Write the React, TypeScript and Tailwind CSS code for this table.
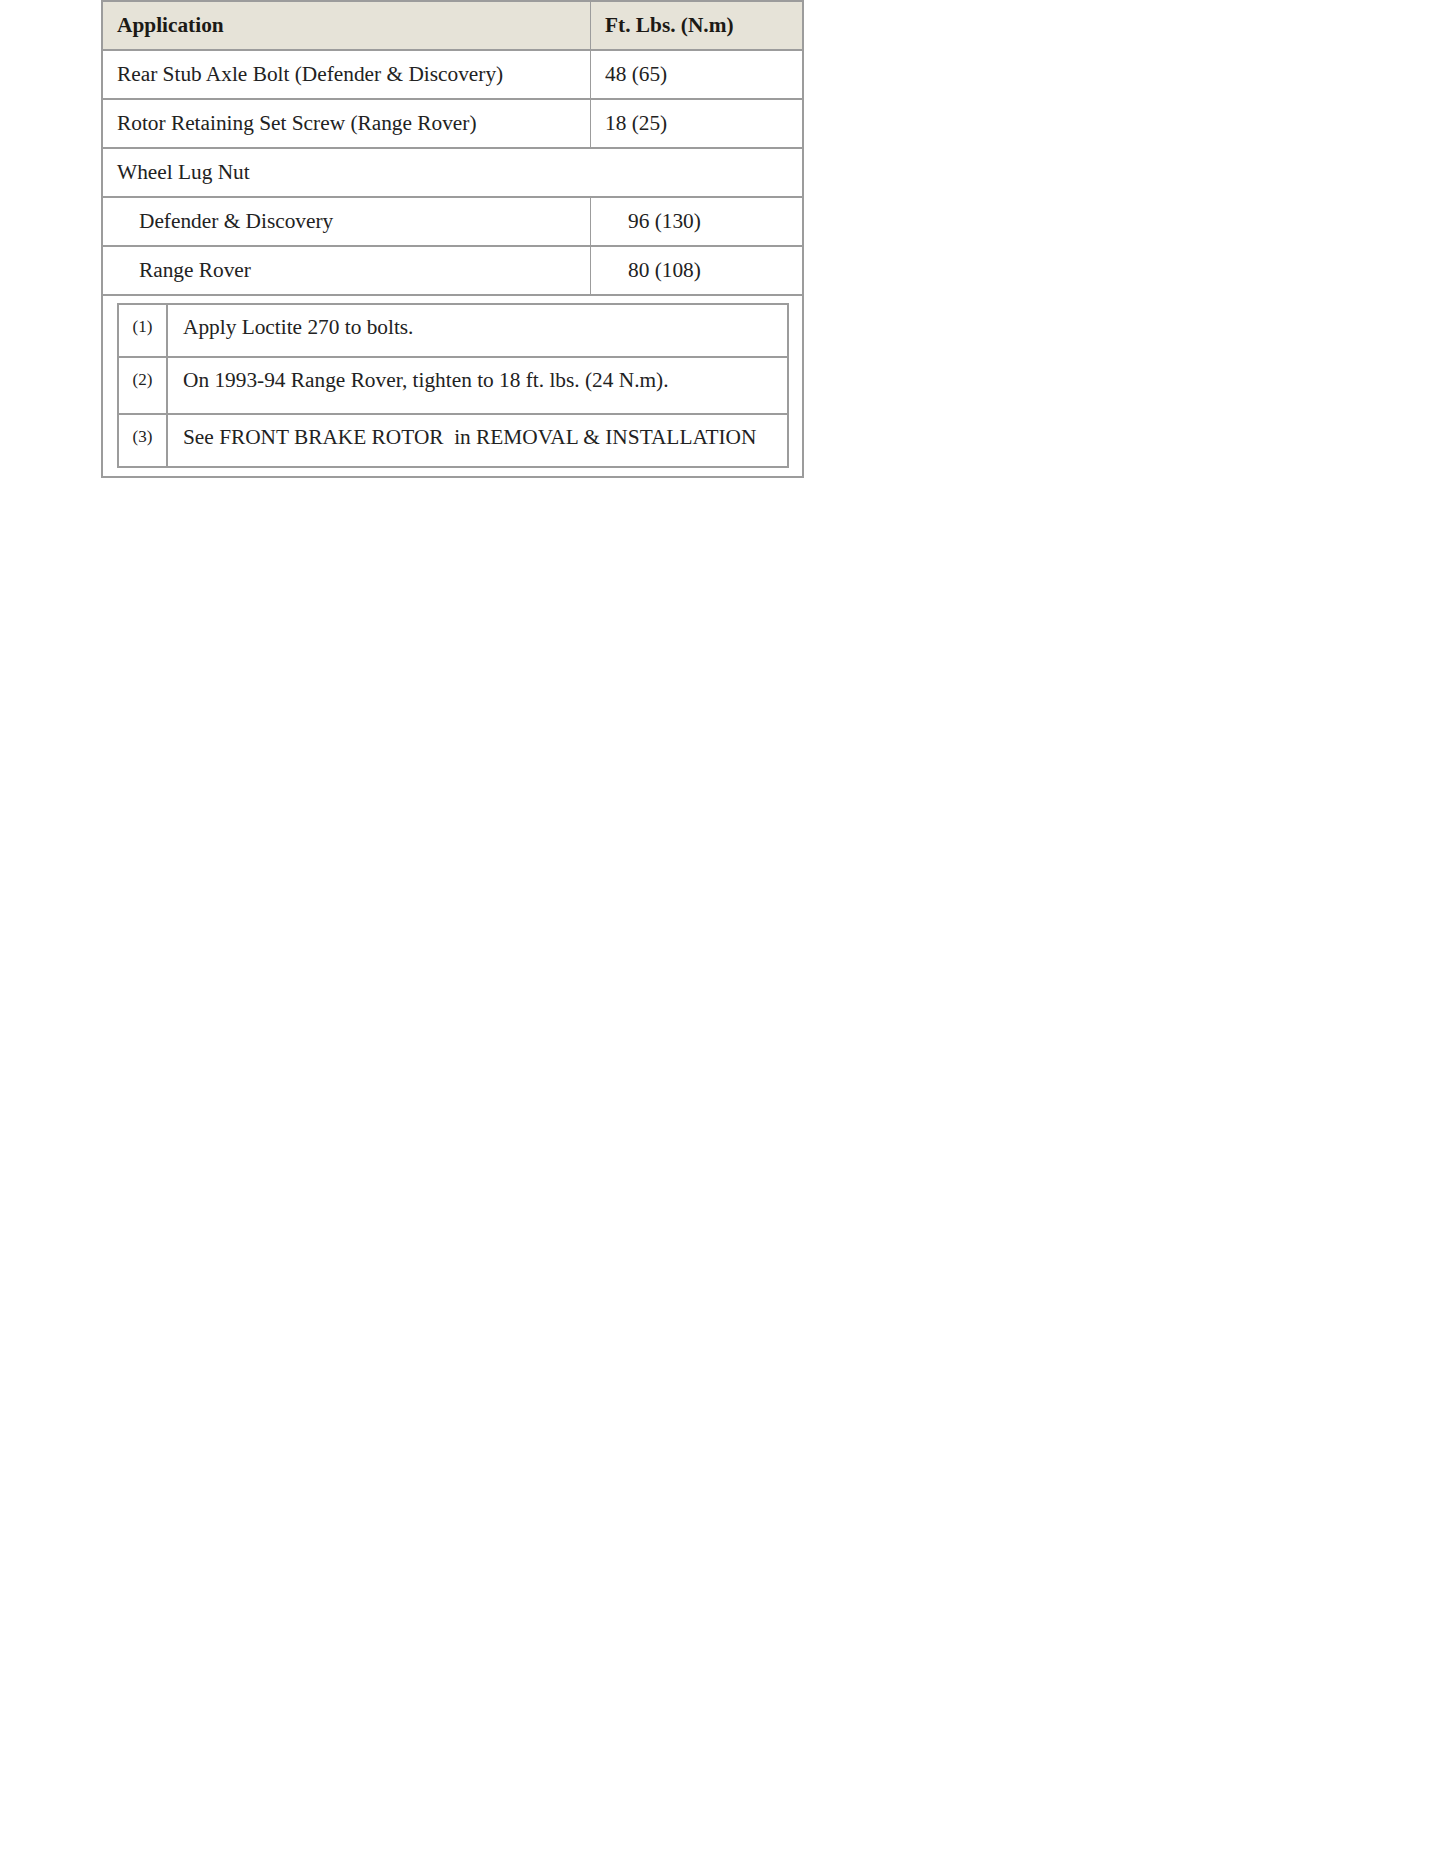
const serif = "font-['Liberation_Serif','Times_New_Roman',serif]"

type Row = { label: string; value?: string; sub?: boolean }

const rows: Row[] = [
  { label: 'Rear Stub Axle Bolt (Defender & Discovery)', value: '48 (65)' },
  { label: 'Rotor Retaining Set Screw (Range Rover)', value: '18 (25)' },
  { label: 'Wheel Lug Nut' },
  { label: 'Defender & Discovery', value: '96 (130)', sub: true },
  { label: 'Range Rover', value: '80 (108)', sub: true },
]

const notes = [
  { n: '(1)', text: 'Apply Loctite 270 to bolts.', h: 'h-[53px]' },
  { n: '(2)', text: 'On 1993-94 Range Rover, tighten to 18 ft. lbs. (24 N.m).', h: 'h-[57px]' },
  { n: '(3)', text: 'See FRONT BRAKE ROTOR\u00a0 in REMOVAL & INSTALLATION', h: 'h-[51px]' },
]

function TorqueRow({ row }: { row: Row }) {
  if (row.value === undefined) {
    return (
      <div className="flex h-[49px] items-center border-b-2 border-[#9c9c9c] px-[14px]">
        <span>{row.label}</span>
      </div>
    )
  }
  return (
    <div className="flex h-[49px] border-b-2 border-[#9c9c9c]">
      <div
        className={[
          'flex w-[488px] shrink-0 items-center border-r border-[#9c9c9c]',
          row.sub ? 'pl-[36px]' : 'pl-[14px]',
        ].join(' ')}
      >
        {row.label}
      </div>
      <div className={['flex flex-1 items-center', row.sub ? 'pl-[37px]' : 'pl-[14px]'].join(' ')}>
        {row.value}
      </div>
    </div>
  )
}

export default function App() {
  return (
    <div className={`min-h-screen bg-white ${serif} text-[21.33px] leading-[25px] text-[#222]`}>
      <div className="ml-[101px] w-[703px] border-2 border-[#9c9c9c]">
        <div className="flex h-[49px] border-b-2 border-[#9c9c9c] bg-[#e6e3d8] font-bold text-[#1c1a16]">
          <div className="flex w-[488px] shrink-0 items-center border-r border-[#9c9c9c] pl-[14px]">Application</div>
          <div className="flex flex-1 items-center pl-[14px]">Ft. Lbs. (N.m)</div>
        </div>

        {rows.map(row => (
          <TorqueRow key={row.label} row={row} />
        ))}

        <div className="pt-[7px] pr-[13px] pb-[8px] pl-[14px]">
          <div className="border-2 border-[#9c9c9c]">
            {notes.map((note, i) => (
              <div
                key={note.n}
                className={['flex', note.h, i < notes.length - 1 ? 'border-b-2 border-[#9c9c9c]' : ''].join(' ')}
              >
                <div className="w-[49px] shrink-0 border-r-2 border-[#9c9c9c] pt-[9px] text-center text-[17px]">
                  {note.n}
                </div>
                <div className="flex-1 pt-[10px] pl-[15px]">{note.text}</div>
              </div>
            ))}
          </div>
        </div>
      </div>
    </div>
  )
}
